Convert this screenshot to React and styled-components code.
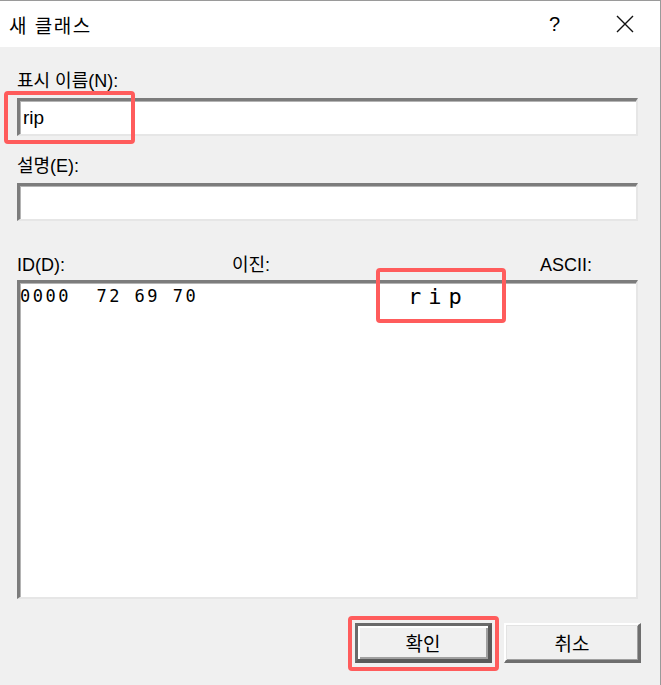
import React from "react"
import styled, { createGlobalStyle } from "styled-components"

const GlobalStyle = createGlobalStyle`
  html, body {
    margin: 0;
    padding: 0;
    background: #f0f0f0;
  }
  * {
    box-sizing: border-box;
  }
`

const UI_FONT = `"Liberation Sans", "Noto Sans CJK KR", sans-serif`

export default function App() {
  return (
    <>
      <GlobalStyle />
      <Dialog>
        <TitleBar>
          <Title>새 클래스</Title>
          <TitleButtons>
            <HelpButton>?</HelpButton>
            <CloseButton>
              <svg width="18" height="18" viewBox="0 0 18 18">
                <path d="M1 1 L17 17 M17 1 L1 17" stroke="#111" strokeWidth="1.4" fill="none" />
              </svg>
            </CloseButton>
          </TitleButtons>
        </TitleBar>

        <Body>
          <Label>표시 이름(N):</Label>
          <TextField defaultValue="rip" />

          <Label $top={17}>설명(E):</Label>
          <TextField defaultValue="" />

          <ColumnHeaders>
            <ColumnHeader $width={215}>ID(D):</ColumnHeader>
            <ColumnHeader $width={308}>이진:</ColumnHeader>
            <ColumnHeader>ASCII:</ColumnHeader>
          </ColumnHeaders>

          <HexBox>
            <HexRow>
              <HexCells>0000  72 69 70</HexCells>
              <AsciiCells>rip</AsciiCells>
            </HexRow>
          </HexBox>

          <ButtonRow>
            <DialogButton $default>확인</DialogButton>
            <DialogButton>취소</DialogButton>
          </ButtonRow>
        </Body>

        <Highlight style={{ left: 4, top: 90, width: 131, height: 53 }} />
        <Highlight style={{ left: 376, top: 267, width: 130, height: 55 }} />
        <Highlight style={{ left: 348, top: 615, width: 151, height: 55 }} />
      </Dialog>
    </>
  )
}

const Dialog = styled.div`
  position: relative;
  width: 661px;
  height: 685px;
  background: #f0f0f0;
  border-top: 1px solid #9a9a9a;
  border-right: 1px solid #9a9a9a;
  display: flex;
  flex-direction: column;
  font-family: ${UI_FONT};
  color: #000;
`

const TitleBar = styled.div`
  height: 46px;
  background: #ffffff;
  display: flex;
  align-items: center;
  justify-content: space-between;
  padding: 0 26px 0 9px;
`

const Title = styled.div`
  font-size: 19px;
  letter-spacing: 1.5px;
  color: #000;
`

const TitleButtons = styled.div`
  display: flex;
  align-items: center;
  gap: 56px;
`

const HelpButton = styled.div`
  font-size: 20px;
  line-height: 20px;
`

const CloseButton = styled.div`
  display: flex;
  width: 18px;
  height: 18px;
`

const Body = styled.div`
  flex: 1;
  display: flex;
  flex-direction: column;
  padding: 0 22px 0 17px;
`

const Label = styled.div`
  margin-top: ${(p) => p.$top ?? 21}px;
  height: 26px;
  font-size: 18px;
  line-height: 26px;
`

const TextField = styled.input`
  margin-top: 4px;
  width: 100%;
  height: 38px;
  padding: 0 3px;
  background: #ffffff;
  border-style: solid;
  border-width: 3px 2px 2px 3px;
  border-color: #7c7c7c #e6e6e6 #e6e6e6 #7c7c7c;
  box-shadow: inset 1px 1px 0 #b4b4b4;
  font-family: ${UI_FONT};
  font-size: 19px;
  color: #000;
  outline: none;
`

const ColumnHeaders = styled.div`
  margin-top: 31px;
  display: flex;
  height: 26px;
  font-size: 18px;
  line-height: 26px;
`

const ColumnHeader = styled.div`
  width: ${(p) => (p.$width ? `${p.$width}px` : "auto")};
  flex: ${(p) => (p.$width ? "none" : 1)};
`

const HexBox = styled.div`
  margin-top: 2px;
  height: 319px;
  background: #ffffff;
  border-style: solid;
  border-width: 3px 2px 2px 3px;
  border-color: #7c7c7c #e6e6e6 #e6e6e6 #7c7c7c;
  box-shadow: inset 1px 1px 0 #b4b4b4;
  padding: 2px 0 0 0;
`

const HexRow = styled.div`
  display: flex;
  height: 22px;
  align-items: center;
`

const HexCells = styled.div`
  width: 388px;
  white-space: pre;
  font-family: "DejaVu Sans Mono", monospace;
  font-size: 17px;
  letter-spacing: 2.5px;
  color: #000;
`

const AsciiCells = styled.div`
  font-family: "DejaVu Sans Mono", monospace;
  font-size: 22px;
  letter-spacing: 7px;
  color: #000;
`

const ButtonRow = styled.div`
  margin-top: 24px;
  margin-right: -3px;
  display: flex;
  justify-content: flex-end;
  gap: 12px;
`

const DialogButton = styled.div`
  width: 137px;
  height: 40px;
  display: flex;
  align-items: center;
  justify-content: center;
  background: #f0f0f0;
  font-size: 19px;
  border-style: solid;
  border-width: ${(p) => (p.$default ? "3px 4px 4px 3px" : "2px 3px 3px 2px")};
  border-color: ${(p) =>
    p.$default ? "#6a6a6a #5a5a5a #5a5a5a #6a6a6a" : "#ffffff #6e6e6e #6e6e6e #ffffff"};
  box-shadow: ${(p) =>
    p.$default
      ? "inset 2px 2px 0 #ffffff, inset -2px -2px 0 #a0a0a0"
      : "inset 1px 1px 0 #e3e3e3, inset -1px -1px 0 #a0a0a0"};
`

const Highlight = styled.div`
  position: absolute;
  border: 4px solid #ff5c5c;
  border-radius: 4px;
  pointer-events: none;
`
